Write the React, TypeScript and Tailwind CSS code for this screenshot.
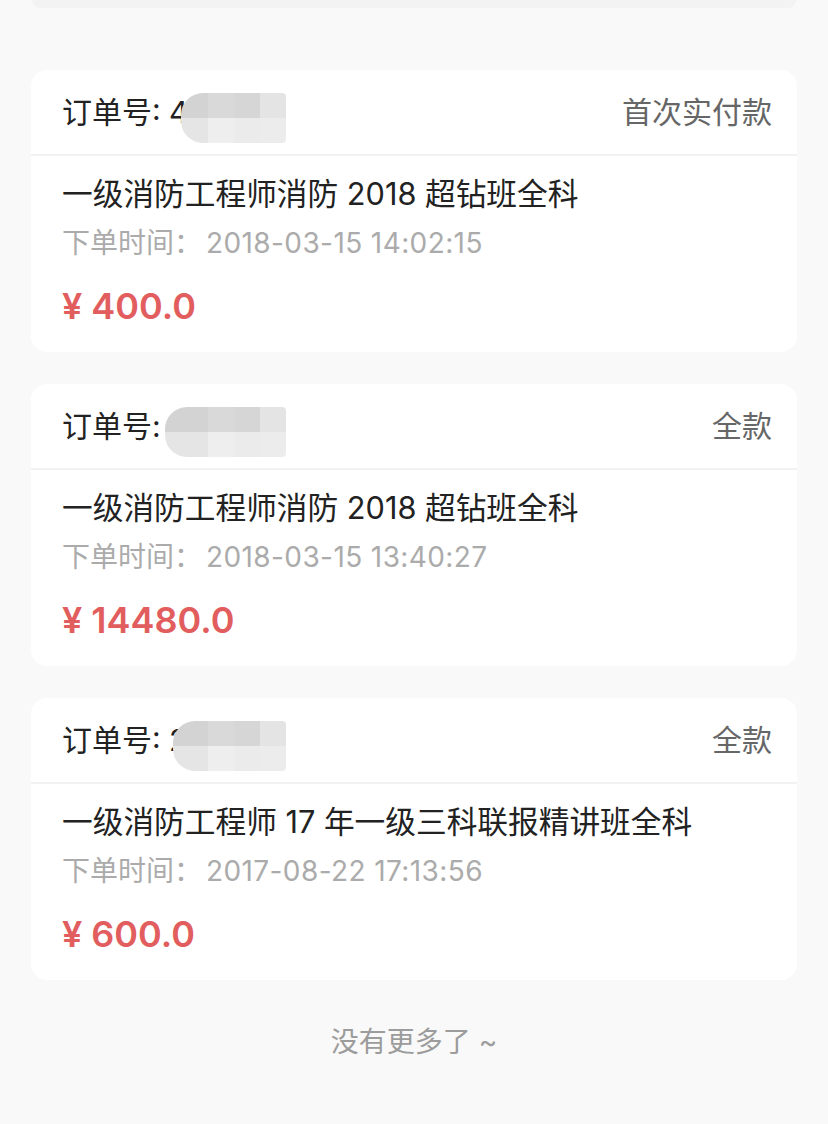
import React from "react";

const font = { fontFamily: 'Inter, "Noto Sans CJK SC", "Noto Sans", sans-serif' };

type Order = {
  prefix: string;
  mosaicLeft: number;
  type: string;
  title: string;
  time: string;
  price: string;
};

const orders: Order[] = [
  {
    prefix: "4",
    mosaicLeft: 150,
    type: "首次实付款",
    title: "一级消防工程师消防 2018 超钻班全科",
    time: "2018-03-15 14:02:15",
    price: "400.0",
  },
  {
    prefix: "",
    mosaicLeft: 134,
    type: "全款",
    title: "一级消防工程师消防 2018 超钻班全科",
    time: "2018-03-15 13:40:27",
    price: "14480.0",
  },
  {
    prefix: "2",
    mosaicLeft: 142,
    type: "全款",
    title: "一级消防工程师 17 年一级三科联报精讲班全科",
    time: "2017-08-22 17:13:56",
    price: "600.0",
  },
];

function Mosaic({ left }: { left: number }) {
  const width = 286 - 31 - left;
  return (
    <div
      className="absolute top-[23px] h-[50px] overflow-hidden rounded-l-[22px] rounded-r-[4px] flex flex-col"
      style={{ left, width }}
    >
      <div className="flex h-[25px]">
        <div className="flex-1 bg-[#d3d3d3]" />
        <div className="w-[26px] bg-[#d9d9d9]" />
        <div className="w-[26px] bg-[#d6d6d6]" />
        <div className="w-[26px] bg-[#e4e4e4]" />
      </div>
      <div className="flex h-[25px]">
        <div className="flex-1 bg-[#e5e5e5]" />
        <div className="w-[26px] bg-[#eeeeee]" />
        <div className="w-[26px] bg-[#ebebeb]" />
        <div className="w-[26px] bg-[#ececec]" />
      </div>
    </div>
  );
}

function OrderCard({ o }: { o: Order }) {
  return (
    <div className="bg-white rounded-[16px] mx-[31px] w-[766px] overflow-hidden">
      <div className="relative h-[86px] flex items-center justify-between pl-[31px] pr-[25px] border-b-2 border-[#f2f2f2]">
        <span className="text-[30px] text-[#222222] leading-none">
          订单号: {o.prefix}
        </span>
        <Mosaic left={o.mosaicLeft} />
        <span className="text-[30px] text-[#666666] leading-none">{o.type}</span>
      </div>
      <div className="pl-[31px] pr-[25px] pt-[18px] pb-[24px] flex flex-col">
        <div className="h-[40px] flex items-center text-[30.7px] text-[#222222] leading-none">
          {o.title}
        </div>
        <div className="h-[40px] mt-[9px] flex items-center text-[28px] text-[#ababab] leading-none">
          下单时间：<span className="ml-[4px] tracking-[0.4px]">{o.time}</span>
        </div>
        <div className="h-[44px] mt-[21px] flex items-center text-[36px] font-semibold text-[#e25d5d] leading-none">
          <span>¥</span>
          <span className="ml-[9px]">{o.price}</span>
        </div>
      </div>
    </div>
  );
}

export default function App() {
  return (
    <div className="w-[828px] h-[1124px] bg-[#f9f9f9] overflow-hidden" style={font}>
      <div className="mx-[32px] h-[8px] bg-[#f3f3f3] rounded-b-[12px]" />
      <div className="pt-[62px] flex flex-col gap-[32px]">
        {orders.map((o, i) => (
          <OrderCard key={i} o={o} />
        ))}
      </div>
      <div className="mt-[44px] text-center text-[28px] text-[#9c9c9c] leading-[36px]">
        没有更多了 ~
      </div>
    </div>
  );
}
